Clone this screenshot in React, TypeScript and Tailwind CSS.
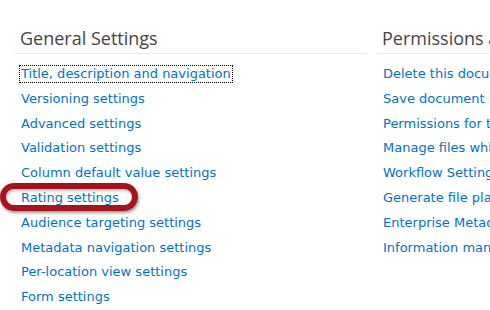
const general = [
  'Title, description and navigation',
  'Versioning settings',
  'Advanced settings',
  'Validation settings',
  'Column default value settings',
  'Rating settings',
  'Audience targeting settings',
  'Metadata navigation settings',
  'Per-location view settings',
  'Form settings',
]

const permissions = [
  'Delete this document library',
  'Save document library as template',
  'Permissions for this document library',
  'Manage files which have no checked in version',
  'Workflow Settings',
  'Generate file plan report',
  'Enterprise Metadata and Keywords Settings',
  'Information management policy settings',
]

function Section({
  title,
  links,
  width,
  first,
}: {
  title: string
  links: string[]
  width: string
  first?: boolean
}) {
  return (
    <div className={`${width} shrink-0`}>
      <h2 className="h-[40px] pt-[27px] pl-[5px] font-['Open_Sans',sans-serif] text-[18px] leading-[22px] whitespace-nowrap text-[#444]">
        {title}
      </h2>
      <div className="mt-[13px] h-px bg-[#e6e6e6]" />
      <ul className="pt-[6px]">
        {links.map((l, i) => (
          <li key={l} className="h-[24.8px] pl-[5px] whitespace-nowrap">
            <a
              href="#"
              className={`inline-block px-px font-['DejaVu_Sans',sans-serif] text-[13px] leading-[16px] text-[#0072c6] ${
                i === 0 && first ? 'outline-1 outline-dotted outline-black' : ''
              }`}
            >
              {l}
            </a>
          </li>
        ))}
      </ul>
    </div>
  )
}

export default function App() {
  return (
    <div className="relative h-[310px] w-[490px] overflow-hidden bg-white">
      <div className="flex gap-[10px] pl-[15px]">
        <Section title="General Settings" links={general} width="w-[352px]" first />
        <Section title="Permissions and Management" links={permissions} width="w-[300px]" />
      </div>
      <div className="absolute top-[183px] left-[0px] h-[28px] w-[138px] rounded-full border-[6px] border-[#a3141c] shadow-[1px_2px_3px_rgba(0,0,0,0.4),inset_1px_2px_3px_rgba(0,0,0,0.25)]" />
    </div>
  )
}
